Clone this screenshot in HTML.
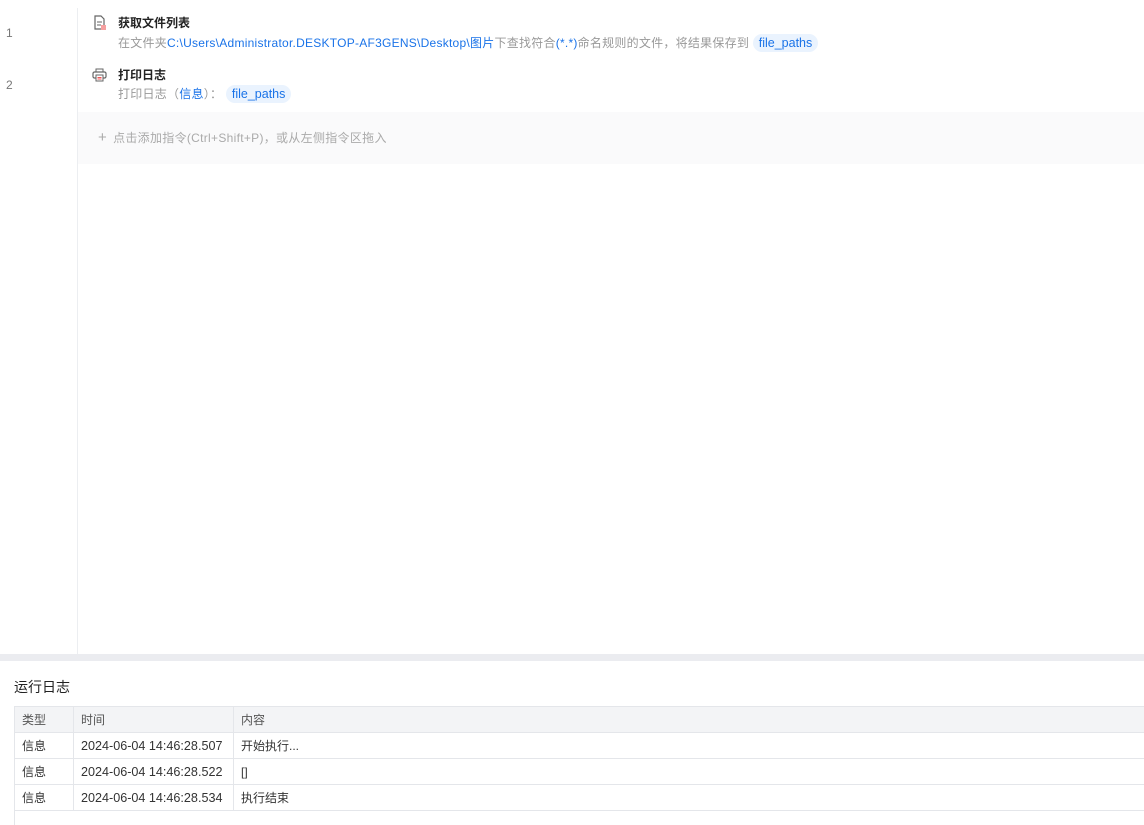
<!DOCTYPE html>
<html><head><meta charset="utf-8"><style>
*{margin:0;padding:0;box-sizing:border-box}
body{width:1144px;height:825px;overflow:hidden;background:#fff;font-family:"Liberation Sans","Noto Sans CJK SC",sans-serif;font-size:12px;color:#333;position:relative}
.gut{position:absolute;left:77px;top:8px;width:1px;height:646px;background:#eceef1}
.ln{position:absolute;left:6px;color:#777;font-size:12px}
.t{position:absolute;left:118px;font-weight:bold;color:#222;font-size:12px}
.d{position:absolute;left:118px;color:#999;font-size:12px;white-space:nowrap;letter-spacing:0.25px}
.b{color:#1a73e8}
.tag{display:inline-block;background:#eaf3fe;color:#1a73e8;border-radius:9px;padding:0 6px;line-height:18px;font-size:12.5px;letter-spacing:0}
.add{position:absolute;left:78px;top:112px;width:1066px;height:52px;background:#fafafb;color:#aaa;padding:17px 0 0 20px;letter-spacing:0.3px}
.band{position:absolute;left:0;top:654px;width:1144px;height:7px;background:#ebecf0}
.log{position:absolute;left:14px;top:677px;font-size:14px;color:#222}
table{position:absolute;left:14px;top:706px;width:1140px;border-collapse:collapse;font-size:12px;color:#333}
td{border:1px solid #e4e6ea;height:26px;padding:0 7px}
td.tm{font-size:12.6px}
tr.h td{background:#f3f4f6;color:#555}
</style></head><body>
<div class="gut"></div>
<div class="ln" style="top:26px">1</div>
<div class="ln" style="top:78px">2</div>
<svg style="position:absolute;left:93px;top:15px" width="14" height="16" viewBox="0 0 14 16"><path d="M2 1h6l3 3v10H2z" fill="none" stroke="#666" stroke-width="1.2"/><path d="M4 7h5M4 10h4" stroke="#666"/><rect x="8" y="10" width="5" height="5" fill="#f5a0a0"/></svg>
<div class="t" style="top:14px">获取文件列表</div>
<div class="d" style="top:34px">在文件夹<span class="b">C:\Users\Administrator.DESKTOP-AF3GENS\Desktop\图片</span>下查找符合<span class="b">(*.*)</span>命名规则的文件，将结果保存到 <span class="tag">file_paths</span></div>
<svg style="position:absolute;left:92px;top:68px" width="15" height="14" viewBox="0 0 15 14"><rect x="4" y="1" width="7" height="3" fill="none" stroke="#666"/><rect x="1" y="4" width="13" height="6" rx="1.5" fill="none" stroke="#666" stroke-width="1.2"/><rect x="4" y="7" width="7" height="6" fill="#fff" stroke="#666"/><path d="M5.5 9.5h4M5.5 11h4" stroke="#e55"/></svg>
<div class="t" style="top:66px">打印日志</div>
<div class="d" style="top:85px">打印日志（<span class="b">信息</span>）：&nbsp;<span class="tag">file_paths</span></div>
<div class="add"><span style="font-size:15px;margin-right:6px">+</span>点击添加指令(Ctrl+Shift+P)，或从左侧指令区拖入</div>
<div class="band"></div>
<div class="log">运行日志</div>
<table>
<tr class="h"><td style="width:59px">类型</td><td style="width:160px">时间</td><td>内容</td></tr>
<tr><td>信息</td><td class="tm">2024-06-04 14:46:28.507</td><td>开始执行...</td></tr>
<tr><td>信息</td><td class="tm">2024-06-04 14:46:28.522</td><td>[]</td></tr>
<tr><td>信息</td><td class="tm">2024-06-04 14:46:28.534</td><td>执行结束</td></tr>
</table>
<div style="position:absolute;left:14px;top:809px;width:1px;height:16px;background:#e4e6ea"></div>
</body></html>
